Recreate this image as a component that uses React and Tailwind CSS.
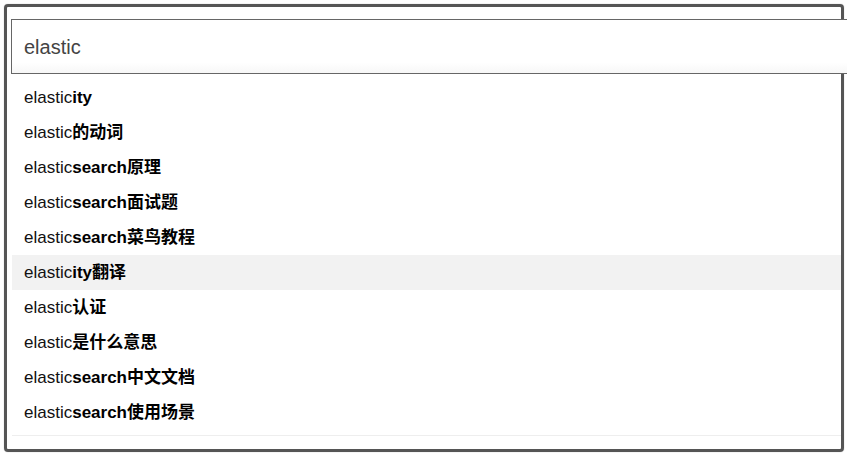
import React from "react";

const items = [
  ["elastic", "ity"],
  ["elastic", "的动词"],
  ["elastic", "search原理"],
  ["elastic", "search面试题"],
  ["elastic", "search菜鸟教程"],
  ["elastic", "ity翻译"],
  ["elastic", "认证"],
  ["elastic", "是什么意思"],
  ["elastic", "search中文文档"],
  ["elastic", "search使用场景"],
];

export default function App() {
  return (
    <div
      className="h-[455px] w-[847px] overflow-hidden bg-white pl-[4px] pt-[4px]"
      style={{ fontFamily: '"Liberation Sans", Arial, "Noto Sans CJK SC", sans-serif' }}
    >
      <div className="h-[448px] w-[840px] rounded-[4px] border-[3px] border-[#555] shadow-[0_0_1px_#999]">
        <div className="pl-[4px] pt-[12px]">
          <div className="flex h-[55px] w-[845px] items-center border border-[#666] bg-gradient-to-b from-white from-80% to-[#f7f7f7] pl-[12px] text-[20px] text-[#444]">
            elastic
          </div>
        </div>
        <ul className="ml-[5px] mt-[6px] border-b border-[#eee] pb-[5px]">
          {items.map(([a, b], i) => (
            <li
              key={i}
              className={`flex h-[35px] items-center pl-[12px] text-[17px] text-[#111] ${i === 5 ? "bg-[#f2f2f2]" : ""}`}
            >
              <span>{a}</span>
              <b className="font-bold text-black">{b}</b>
            </li>
          ))}
        </ul>
      </div>
    </div>
  );
}
